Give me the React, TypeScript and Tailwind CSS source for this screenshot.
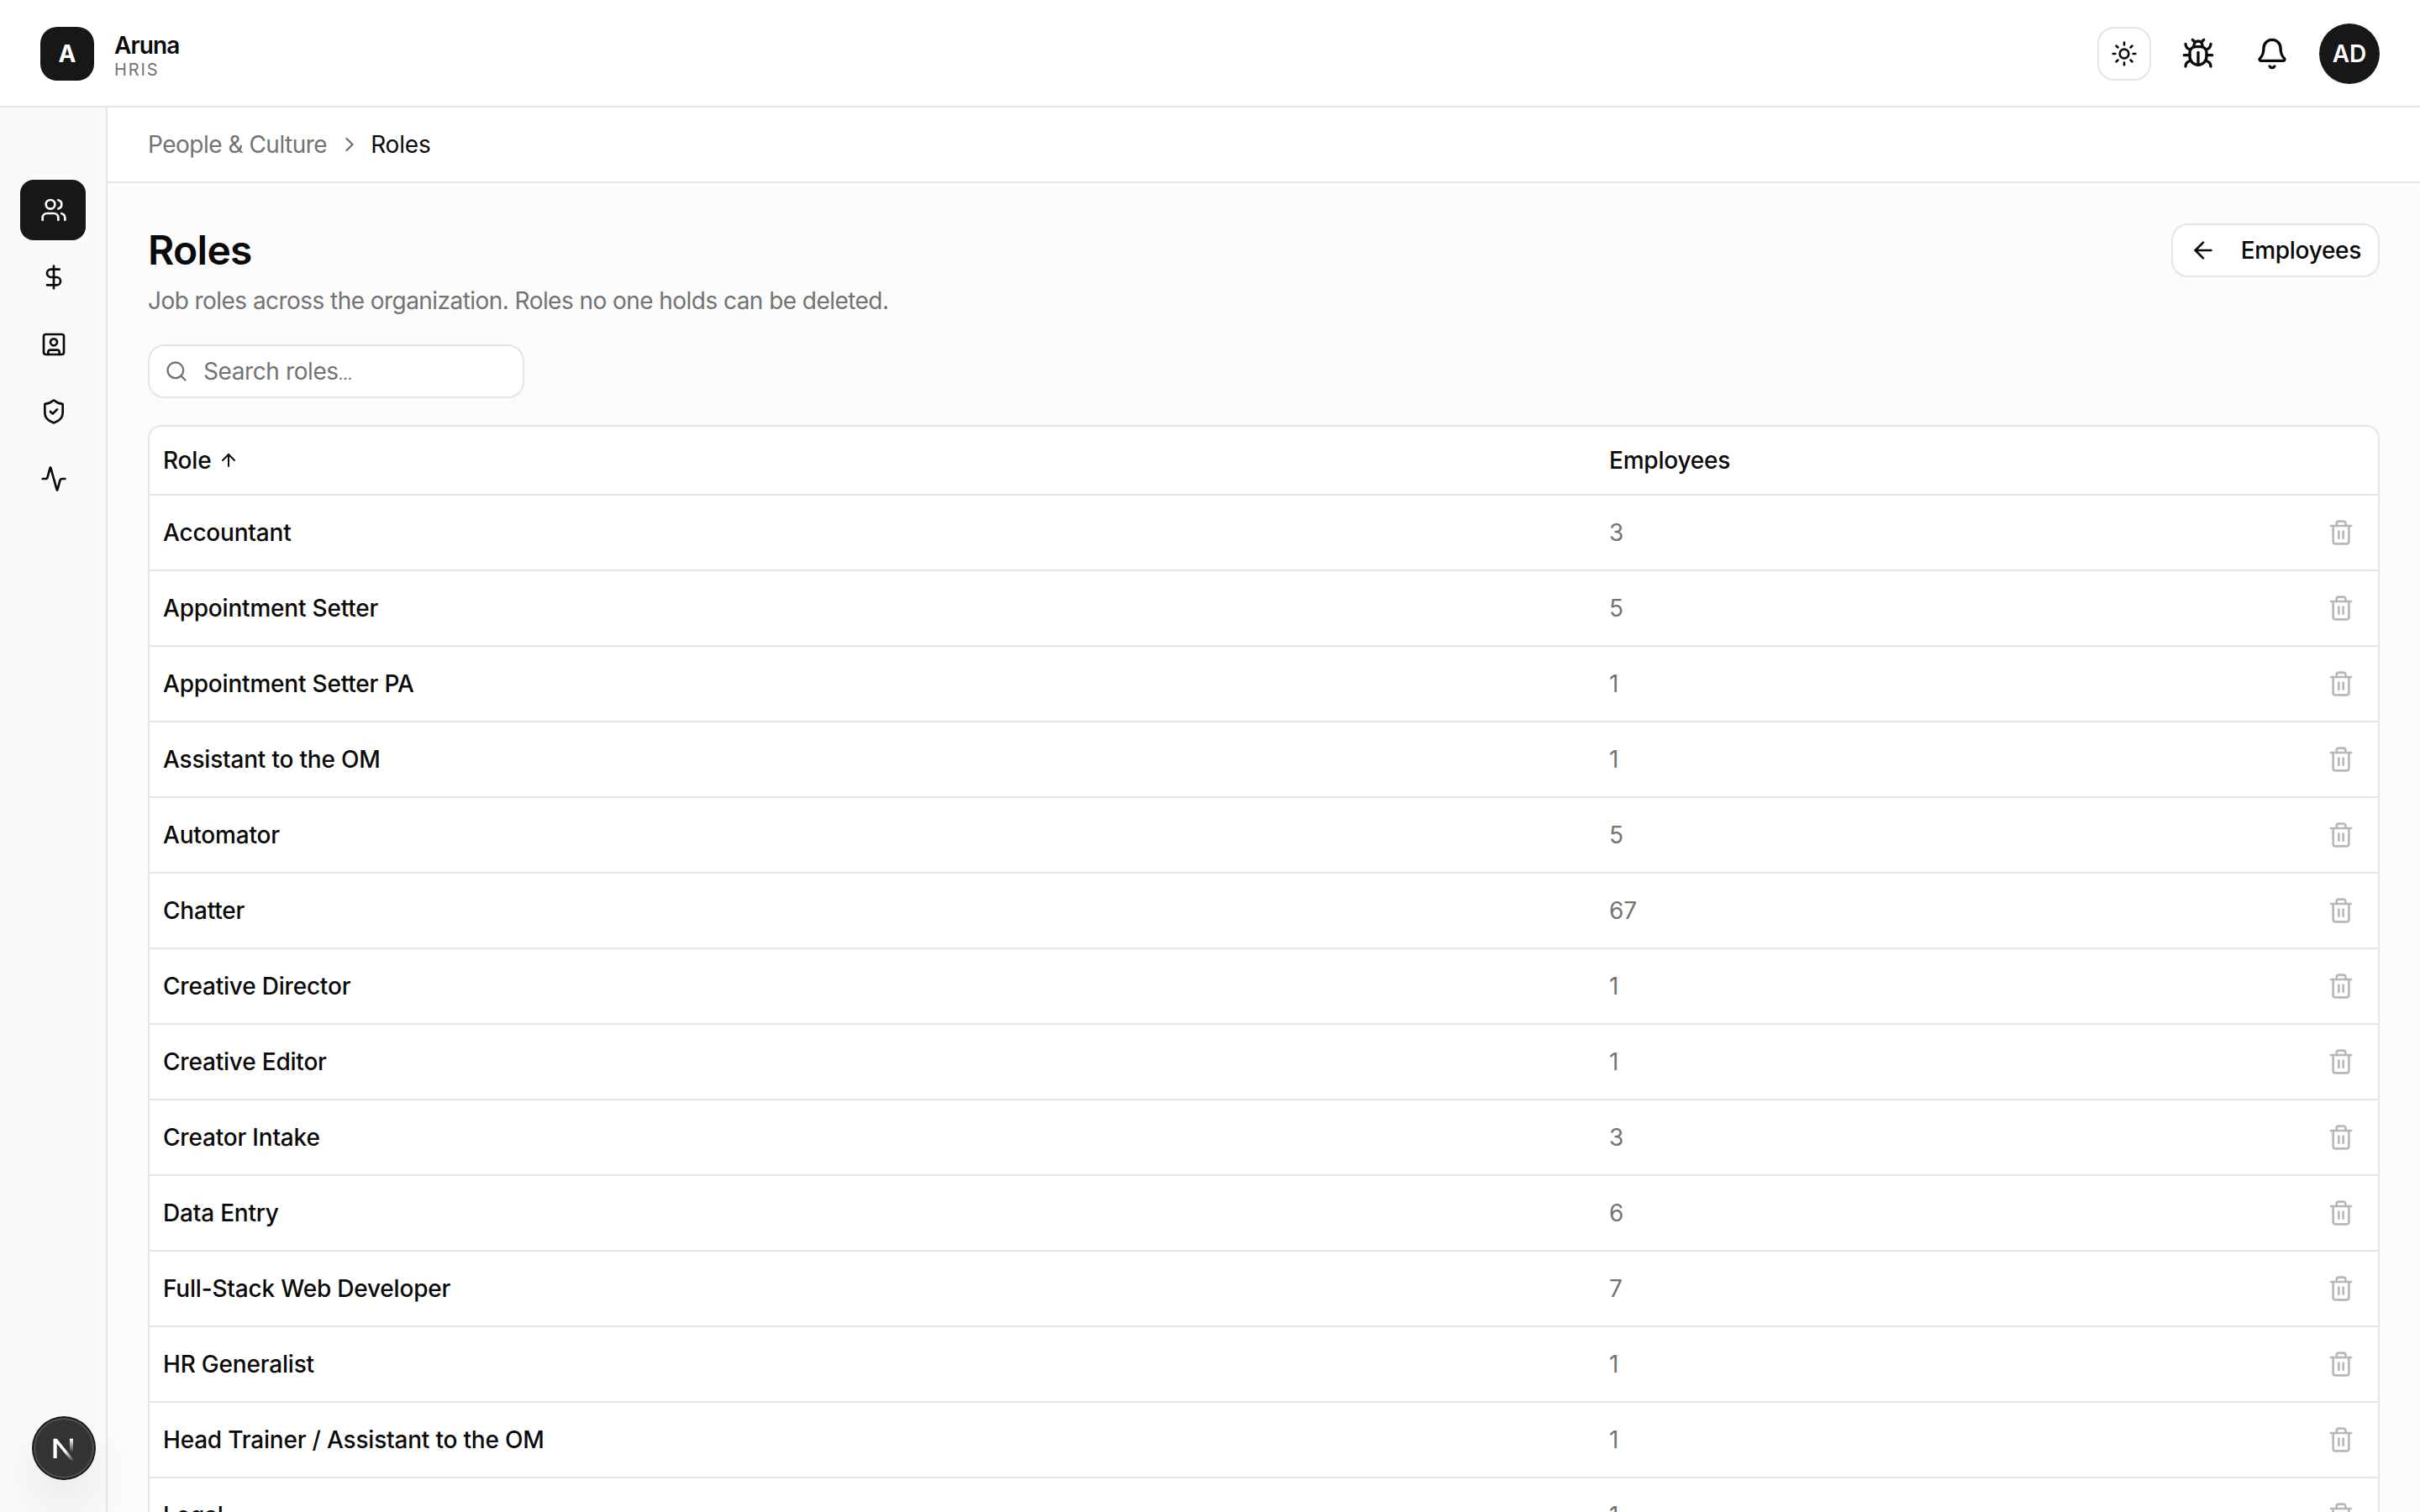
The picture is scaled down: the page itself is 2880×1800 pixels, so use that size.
import { type ReactNode } from "react";
import {
  Activity,
  ArrowLeft,
  ArrowUp,
  Bell,
  Bug,
  ChevronRight,
  DollarSign,
  Search,
  ShieldCheck,
  SquareUser,
  Sun,
  Trash2,
  Users,
} from "lucide-react";

interface Role {
  name: string;
  employees: number;
}

const roles: Role[] = [
  { name: "Accountant", employees: 3 },
  { name: "Appointment Setter", employees: 5 },
  { name: "Appointment Setter PA", employees: 1 },
  { name: "Assistant to the OM", employees: 1 },
  { name: "Automator", employees: 5 },
  { name: "Chatter", employees: 67 },
  { name: "Creative Director", employees: 1 },
  { name: "Creative Editor", employees: 1 },
  { name: "Creator Intake", employees: 3 },
  { name: "Data Entry", employees: 6 },
  { name: "Full-Stack Web Developer", employees: 7 },
  { name: "HR Generalist", employees: 1 },
  { name: "Head Trainer / Assistant to the OM", employees: 1 },
  { name: "Legal", employees: 1 },
];

export default function App() {
  return (
    <div className="flex h-[1800px] w-[2880px] flex-col overflow-hidden bg-[#fbfbfb] font-['Inter','Liberation_Sans',sans-serif] text-[28px] leading-10 text-[#0a0a0a]">
      <TopBar />
      <div className="flex min-h-0 flex-1">
        <Sidebar />
        <main className="flex min-w-0 flex-1 flex-col">
          <Breadcrumb />
          <RolesPage />
        </main>
      </div>
      <DevBadge />
    </div>
  );
}

function TopBar() {
  return (
    <header className="flex h-32 shrink-0 items-center justify-between border-b-2 border-[#e5e5e5] bg-white px-12 pt-0.5">
      <div className="flex items-center gap-6">
        <div className="flex size-16 items-center justify-center rounded-[20px] bg-[#171717] font-bold text-white">
          A
        </div>
        <div className="flex flex-col pt-[5px]">
          <span className="text-[28px] leading-[35px] font-semibold tracking-[-0.9px]">
            Aruna
          </span>
          <span className="-mt-px text-[20px] leading-[25px] tracking-[1.9px] text-[#737373]">
            HRIS
          </span>
        </div>
      </div>
      <div className="flex items-center">
        <button className="flex size-16 items-center justify-center rounded-[20px] border-2 border-[#e5e5e5] bg-white">
          <Sun size={32} />
        </button>
        <button className="ml-6 flex size-16 items-center justify-center">
          <Bug size={40} />
        </button>
        <button className="ml-6 flex size-16 items-center justify-center">
          <Bell size={40} />
        </button>
        <div className="ml-6 flex size-[72px] items-center justify-center rounded-full bg-[#171717] font-semibold text-white">
          AD
        </div>
      </div>
    </header>
  );
}

function Sidebar() {
  return (
    <nav className="flex w-32 shrink-0 flex-col gap-2 border-r-2 border-[#e5e5e5] bg-[#fafafa] pt-[86px] pl-6">
      <NavItem active>
        <Users size={32} />
      </NavItem>
      <NavItem>
        <DollarSign size={32} />
      </NavItem>
      <NavItem>
        <SquareUser size={32} />
      </NavItem>
      <NavItem>
        <ShieldCheck size={32} />
      </NavItem>
      <NavItem>
        <Activity size={32} />
      </NavItem>
    </nav>
  );
}

function NavItem({ active, children }: { active?: boolean; children: ReactNode }) {
  return (
    <button
      className={
        active
          ? "flex h-[72px] w-[78px] items-center rounded-[16px] bg-[#171717] pl-6 text-[#fafafa]"
          : "flex h-[72px] w-[78px] items-center rounded-[16px] pl-6"
      }
    >
      {children}
    </button>
  );
}

function Breadcrumb() {
  return (
    <div className="flex h-[90px] shrink-0 items-center border-b-2 border-[#e5e5e5] bg-white px-12">
      <span className="tracking-[-0.5px] text-[#737373]">People &amp; Culture</span>
      <ChevronRight size={28} className="mr-[11px] ml-[13px] text-[#737373]" />
      <span className="tracking-[-0.2px]">Roles</span>
    </div>
  );
}

function RolesPage() {
  return (
    <section className="flex flex-col px-12 pt-12">
      <div className="flex items-start justify-between">
        <div className="flex flex-col">
          <h1 className="text-[48px] leading-[64px] font-semibold tracking-[-0.7px]">
            Roles
          </h1>
          <p className="mt-2 tracking-[-0.55px] text-[#737373]">
            Job roles across the organization. Roles no one holds can be deleted.
          </p>
        </div>
        <button className="flex h-16 w-[248px] items-center justify-between rounded-[20px] border-2 border-[#e5e5e5] bg-white px-5 font-medium">
          <ArrowLeft size={32} />
          <span className="tracking-[-0.3px]">Employees</span>
        </button>
      </div>

      <div className="mt-8 flex h-16 w-[448px] items-center gap-[18px] rounded-[20px] border-2 border-[#e5e5e5] bg-white px-[18px]">
        <Search size={28} className="text-[#737373]" />
        <span className="tracking-[-0.4px] text-[#737373]">
          Search roles<span className="text-[19px] leading-none">…</span>
        </span>
      </div>

      {/* roles table, runs past the bottom of the window */}
      <div className="mt-8 flex flex-col overflow-hidden rounded-t-[16px] border-2 border-b-0 border-[#e5e5e5] bg-white tracking-[-0.2px]">
        <div className="flex h-[82px] shrink-0 items-center border-b-2 border-[#e5e5e5] px-4 font-medium">
          <div className="flex w-[1721px] items-center gap-[9px]">
            <span>Role</span>
            <ArrowUp size={24} />
          </div>
          <span>Employees</span>
        </div>
        {roles.map((role) => (
          <RoleRow key={role.name} role={role} />
        ))}
      </div>
    </section>
  );
}

function RoleRow({ role }: { role: Role }) {
  return (
    <div className="flex h-[90px] shrink-0 items-center border-b-2 border-[#e5e5e5] px-4">
      <span className="w-[1721px] font-medium">{role.name}</span>
      <span className="flex-1 tracking-normal text-[#737373]">{role.employees}</span>
      <button className="flex size-14 items-center justify-center text-[#737373] opacity-50">
        <Trash2 size={32} />
      </button>
    </div>
  );
}

function DevBadge() {
  return (
    <div className="absolute top-[1688px] left-10 flex size-[72px] items-center justify-center rounded-full bg-[#333333] shadow-[0_0_0_2px_#171717,inset_0_0_0_2px_rgba(255,255,255,0.14),0_32px_64px_-16px_rgba(0,0,0,0.24)]">
      <svg width="72" height="72" viewBox="0 0 72 72" fill="none">
        <defs>
          <linearGradient id="diag" x1="40" y1="38" x2="48" y2="51" gradientUnits="userSpaceOnUse">
            <stop stopColor="white" />
            <stop offset="1" stopColor="white" stopOpacity="0" />
          </linearGradient>
          <linearGradient id="stem" x1="45" y1="25" x2="45" y2="41" gradientUnits="userSpaceOnUse">
            <stop stopColor="white" />
            <stop offset="1" stopColor="white" stopOpacity="0" />
          </linearGradient>
        </defs>
        <path d="M23.5 48V24.7h4.2L48.5 50.5l-3 2L27.7 30.5V48z" fill="url(#diag)" />
        <path d="M43 24.7h4V41h-4z" fill="url(#stem)" />
      </svg>
    </div>
  );
}
